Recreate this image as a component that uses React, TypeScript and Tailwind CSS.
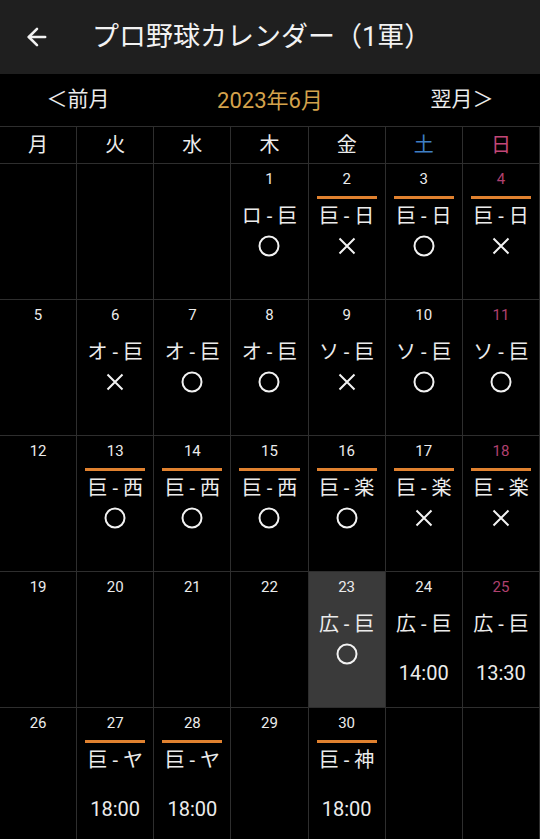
import { ArrowLeft } from 'lucide-react';

type Day = {
  d: number;
  bar?: boolean;
  t?: string;
  r?: 'o' | 'x';
  time?: string;
  sel?: boolean;
} | null;

const weekdays = ['月', '火', '水', '木', '金', '土', '日'];

const weeks: Day[][] = [
  [null, null, null,
    { d: 1, t: 'ロ - 巨', r: 'o' },
    { d: 2, bar: true, t: '巨 - 日', r: 'x' },
    { d: 3, bar: true, t: '巨 - 日', r: 'o' },
    { d: 4, bar: true, t: '巨 - 日', r: 'x' }],
  [{ d: 5 },
    { d: 6, t: 'オ - 巨', r: 'x' },
    { d: 7, t: 'オ - 巨', r: 'o' },
    { d: 8, t: 'オ - 巨', r: 'o' },
    { d: 9, t: 'ソ - 巨', r: 'x' },
    { d: 10, t: 'ソ - 巨', r: 'o' },
    { d: 11, t: 'ソ - 巨', r: 'o' }],
  [{ d: 12 },
    { d: 13, bar: true, t: '巨 - 西', r: 'o' },
    { d: 14, bar: true, t: '巨 - 西', r: 'o' },
    { d: 15, bar: true, t: '巨 - 西', r: 'o' },
    { d: 16, bar: true, t: '巨 - 楽', r: 'o' },
    { d: 17, bar: true, t: '巨 - 楽', r: 'x' },
    { d: 18, bar: true, t: '巨 - 楽', r: 'x' }],
  [{ d: 19 }, { d: 20 }, { d: 21 }, { d: 22 },
    { d: 23, t: '広 - 巨', r: 'o', sel: true },
    { d: 24, t: '広 - 巨', time: '14:00' },
    { d: 25, t: '広 - 巨', time: '13:30' }],
  [{ d: 26 },
    { d: 27, bar: true, t: '巨 - ヤ', time: '18:00' },
    { d: 28, bar: true, t: '巨 - ヤ', time: '18:00' },
    { d: 29 },
    { d: 30, bar: true, t: '巨 - 神', time: '18:00' },
    null, null],
];

function Result({ r }: { r: 'o' | 'x' }) {
  return (
    <div className="h-[28px] flex items-center justify-center">
      {r === 'o' ? (
        <svg width="22" height="22" viewBox="0 0 22 22">
          <circle cx="11" cy="11" r="9.5" fill="none" stroke="#f2f2f2" strokeWidth="2" />
        </svg>
      ) : (
        <svg width="20" height="20" viewBox="0 0 20 20">
          <path d="M2.5 2.5 L17.5 17.5 M17.5 2.5 L2.5 17.5" stroke="#f2f2f2" strokeWidth="2" />
        </svg>
      )}
    </div>
  );
}

function Cell({ day, col }: { day: Day; col: number }) {
  if (!day) return <div className="h-[136px] border-r border-b border-[#2e2e2e]" />;
  return (
    <div className={`h-[136px] border-r border-b border-[#2e2e2e] ${day.sel ? 'bg-[#3a3a3a]' : ''}`}>
      <div className={`h-[30px] flex items-center justify-center text-[15px] ${col === 6 ? 'text-[#b0416f]' : 'text-[#ececec]'}`}>
        {day.d}
      </div>
      <div className="h-[6px] pt-[2px] px-[8px]">
        {day.bar && <div className="h-[3px] bg-[#e0812f]" />}
      </div>
      {day.t && (
        <div className="h-[32px] flex items-center justify-center text-[20px] text-[#ececec] whitespace-nowrap">
          {day.t}
        </div>
      )}
      {day.r && <Result r={day.r} />}
      {day.time && (
        <div className="mt-[13px] h-[40px] flex items-center justify-center text-[20px] text-[#ececec]">
          {day.time}
        </div>
      )}
    </div>
  );
}

export default function App() {
  return (
    <div
      className="w-[540px] h-[839px] overflow-hidden bg-black text-white"
      style={{ fontFamily: 'Roboto, "Noto Sans CJK JP", sans-serif' }}
    >
      <header className="h-[74px] bg-[#1f1f1f] flex items-center">
        <div className="w-[74px] flex items-center justify-center">
          <ArrowLeft size={28} strokeWidth={2.2} color="#f2f2f2" />
        </div>
        <h1 className="ml-[18px] text-[27px] text-[#f2f2f2]">プロ野球カレンダー（1軍）</h1>
      </header>

      <div className="h-[53px] flex items-center border-b border-[#2e2e2e] text-[21px]">
        <div className="w-[156px] flex justify-center text-[#ececec]">＜前月</div>
        <div className="flex-1 flex justify-center text-[22px] text-[#d4a24c]">2023年6月</div>
        <div className="w-[156px] flex justify-center text-[#ececec]">翌月＞</div>
      </div>

      <div className="grid grid-cols-7 border-b border-[#2e2e2e]">
        {weekdays.map((w, i) => (
          <div
            key={w}
            className={`h-[36px] flex items-center justify-center text-[20px] border-r border-[#2e2e2e] ${
              i === 5 ? 'text-[#3f7fc4]' : i === 6 ? 'text-[#c24778]' : 'text-[#ececec]'
            }`}
          >
            {w}
          </div>
        ))}
      </div>

      <div className="grid grid-cols-7">
        {weeks.map((week, wi) =>
          week.map((day, di) => <Cell key={`${wi}-${di}`} day={day} col={di} />)
        )}
      </div>
    </div>
  );
}
